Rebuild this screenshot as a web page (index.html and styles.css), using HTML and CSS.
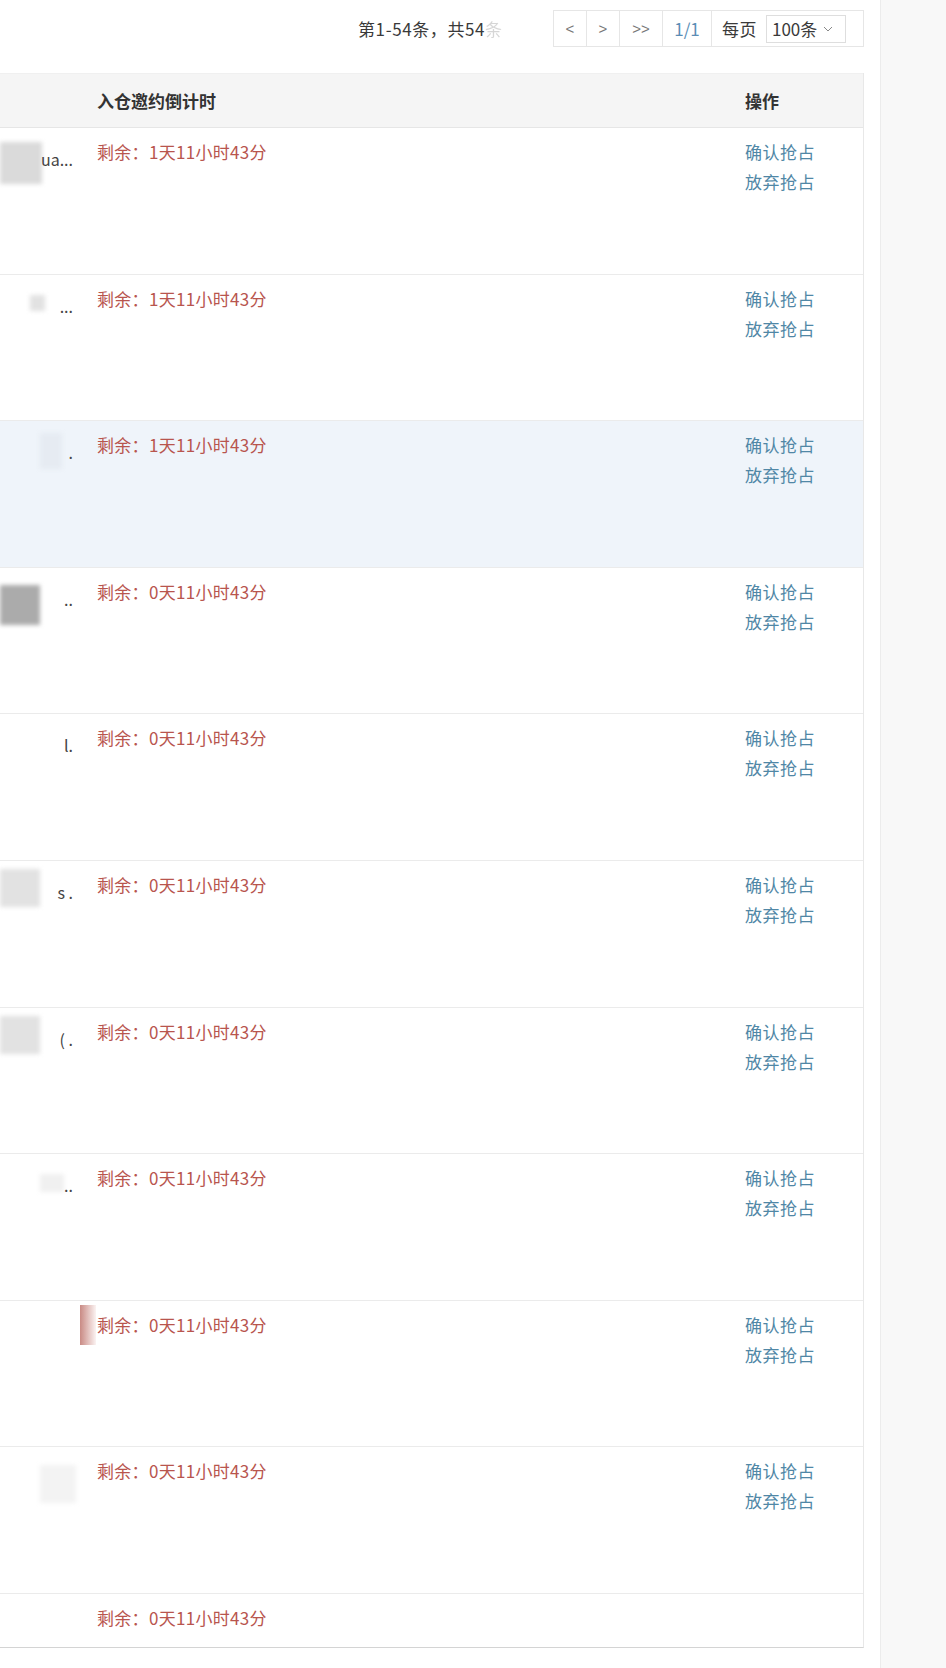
FILE: index.html
```html
<!DOCTYPE html>
<html lang="zh-CN">
<head>
<meta charset="utf-8">
<title>入仓邀约</title>
<link rel="stylesheet" href="styles.css">
</head>
<body>
<div class="page">
  <div class="main">
    <div class="pager-bar">
      <span class="total">第1-54条，共54<span class="fade">条</span></span>
      <div class="pager">
        <span class="pg-cell w33">&lt;</span>
        <span class="pg-cell w33">&gt;</span>
        <span class="pg-cell w43">&gt;&gt;</span>
        <span class="pg-cell w49 current">1/1</span>
        <span class="pg-size">
          <span class="pg-label">每页</span>
          <span class="select">100条
            <svg class="chev" width="10" height="6" viewBox="0 0 10 6"><path d="M1 1l4 4 4-4" fill="none" stroke="#888" stroke-width="1"/></svg>
          </span>
        </span>
      </div>
    </div>

    <div class="table">
      <div class="row head">
        <div class="cell c1"></div>
        <div class="cell c2">入仓邀约倒计时</div>
        <div class="cell c3">操作</div>
      </div>

      <div class="row">
        <div class="cell c1"><span class="mask m1"></span><span class="trunc">ua...</span></div>
        <div class="cell c2 timer">剩余：1天11小时43分</div>
        <div class="cell c3"><a class="link">确认抢占</a><a class="link">放弃抢占</a></div>
      </div>
      <div class="row">
        <div class="cell c1"><span class="mask m2"></span><span class="trunc">...</span></div>
        <div class="cell c2 timer">剩余：1天11小时43分</div>
        <div class="cell c3"><a class="link">确认抢占</a><a class="link">放弃抢占</a></div>
      </div>
      <div class="row hover">
        <div class="cell c1"><span class="mask m3"></span><span class="trunc">.</span></div>
        <div class="cell c2 timer">剩余：1天11小时43分</div>
        <div class="cell c3"><a class="link">确认抢占</a><a class="link">放弃抢占</a></div>
      </div>
      <div class="row">
        <div class="cell c1"><span class="mask m4"></span><span class="trunc">..</span></div>
        <div class="cell c2 timer">剩余：0天11小时43分</div>
        <div class="cell c3"><a class="link">确认抢占</a><a class="link">放弃抢占</a></div>
      </div>
      <div class="row">
        <div class="cell c1"><span class="trunc">l.</span></div>
        <div class="cell c2 timer">剩余：0天11小时43分</div>
        <div class="cell c3"><a class="link">确认抢占</a><a class="link">放弃抢占</a></div>
      </div>
      <div class="row">
        <div class="cell c1"><span class="mask m6"></span><span class="trunc">s .</span></div>
        <div class="cell c2 timer">剩余：0天11小时43分</div>
        <div class="cell c3"><a class="link">确认抢占</a><a class="link">放弃抢占</a></div>
      </div>
      <div class="row">
        <div class="cell c1"><span class="mask m6"></span><span class="trunc">( .</span></div>
        <div class="cell c2 timer">剩余：0天11小时43分</div>
        <div class="cell c3"><a class="link">确认抢占</a><a class="link">放弃抢占</a></div>
      </div>
      <div class="row">
        <div class="cell c1"><span class="mask m8"></span><span class="trunc">..</span></div>
        <div class="cell c2 timer">剩余：0天11小时43分</div>
        <div class="cell c3"><a class="link">确认抢占</a><a class="link">放弃抢占</a></div>
      </div>
      <div class="row">
        <div class="cell c1"><span class="mask m9"></span></div>
        <div class="cell c2 timer">剩余：0天11小时43分</div>
        <div class="cell c3"><a class="link">确认抢占</a><a class="link">放弃抢占</a></div>
      </div>
      <div class="row">
        <div class="cell c1"><span class="mask m10"></span></div>
        <div class="cell c2 timer">剩余：0天11小时43分</div>
        <div class="cell c3"><a class="link">确认抢占</a><a class="link">放弃抢占</a></div>
      </div>
      <div class="row last">
        <div class="cell c1"></div>
        <div class="cell c2 timer">剩余：0天11小时43分</div>
        <div class="cell c3"></div>
      </div>
    </div>
  </div>
  <aside class="side"></aside>
</div>
</body>
</html>
```

FILE: styles.css
```css
* { box-sizing: border-box; }

html, body {
  margin: 0;
  padding: 0;
  background: #fff;
}

body {
  font-family: "Noto Sans CJK SC", "Noto Sans", sans-serif;
  color: #444;
  font-size: 16px;
}

.page {
  display: flex;
  width: 946px;
  height: 1668px;
  overflow: hidden;
}

.main {
  width: 880px;
  flex: none;
}

.side {
  flex: 1;
  background: #f8f8f8;
  border-left: 1px solid #ececec;
}

/* pager */
.pager-bar {
  height: 73px;
  display: flex;
  align-items: flex-start;
  padding: 10px 16px 0 358px;
}

.total {
  font-size: 17px;
  letter-spacing: 0.6px;
  line-height: 37px;
  color: #3a3a3a;
}

.fade { opacity: 0.2; }

.pager {
  margin-left: auto;
  display: flex;
  height: 37px;
  border: 1px solid #e6e6e6;
  background: #fff;
}

.pg-cell {
  display: flex;
  align-items: center;
  justify-content: center;
  border-right: 1px solid #e6e6e6;
  font-size: 15px;
  color: #777;
  font-family: "Liberation Sans", "Noto Sans CJK SC", sans-serif;
}

.w33 { width: 33px; }
.w43 { width: 43px; }
.w49 { width: 49px; }

.current {
  color: #5b8db5;
  font-family: "Noto Sans CJK SC", sans-serif;
  font-size: 17px;
}

.pg-size {
  display: flex;
  align-items: center;
  width: 151px;
  padding-left: 10px;
}

.pg-label {
  font-size: 17px;
  letter-spacing: 0.5px;
  color: #3a3a3a;
  margin-right: 9px;
}

.select {
  display: flex;
  align-items: center;
  width: 80px;
  height: 28px;
  border: 1px solid #dedede;
  padding-left: 5px;
  font-size: 17px;
  color: #3a3a3a;
}

.chev {
  margin-left: 6px;
}

/* table */
.table {
  width: 864px;
  border-right: 1px solid #e8e8e8;
  border-bottom: 1px solid #d4d4d4;
}

.row {
  display: grid;
  grid-template-columns: 85px 648px 130px;
  height: 146.6px;
  border-bottom: 1px solid #ebebeb;
}

.row.head {
  height: 55px;
  background: #f5f5f5;
  border-top: 1px solid #f0f0f0;
  border-bottom: 1px solid #e6e6e6;
}

.row.head .cell {
  padding-top: 0;
  line-height: 53px;
  font-weight: bold;
  font-size: 17px;
  color: #333;
}

.row.hover { background: #eff4fa; }

.row.last {
  height: 53px;
  border-bottom: none;
}

.cell {
  padding: 9px 12px 0 12px;
  line-height: 30px;
  font-size: 17px;
}

.c1 {
  position: relative;
  text-align: right;
  color: #444;
  font-size: 16px;
  white-space: nowrap;
}

.trunc {
  position: relative;
  top: 7px;
}

.timer {
  color: #b8554e;
  letter-spacing: 0.3px;
}

.c3 {
  display: flex;
  flex-direction: column;
  align-items: flex-start;
}

.link {
  color: #5087a6;
  letter-spacing: 0.5px;
  cursor: pointer;
}

/* redaction overlays in the first column */
.mask {
  position: absolute;
  filter: blur(2px);
}

.m1 { left: 0; top: 14px; width: 42px; height: 42px; background: #dadada; }
.m2 { left: 30px; top: 20px; width: 15px; height: 16px; background: #e2e2e2; }
.m3 { left: 40px; top: 12px; width: 22px; height: 36px; background: #e6ebf2; }
.m4 { left: 0; top: 17px; width: 40px; height: 40px; background: #ababab; }
.m6 { left: 0; top: 8px; width: 40px; height: 38px; background: #e2e2e2; }
.m8 { left: 40px; top: 20px; width: 24px; height: 18px; background: #f0f0f0; }
.m9 { left: 80px; top: 4px; width: 16px; height: 40px; background: linear-gradient(90deg, #c98a84, #fbf3f2); filter: blur(0.5px); }
.m10 { left: 40px; top: 18px; width: 36px; height: 38px; background: #f3f3f3; }
```
